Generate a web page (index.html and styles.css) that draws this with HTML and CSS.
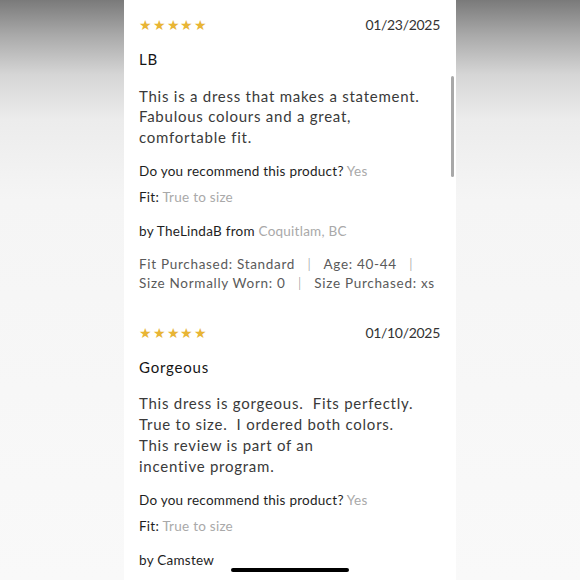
FILE: index.html
```html
<!DOCTYPE html>
<html>
<head>
<meta charset="utf-8">
<link rel="stylesheet" href="styles.css">
</head>
<body>
<div class="screen">
  <div class="panel">
    <div class="review">
      <div class="head">
        <div class="stars"><span>★</span><span>★</span><span>★</span><span>★</span><span>★</span></div>
        <div class="date">01/23/2025</div>
      </div>
      <div class="title">LB</div>
      <p class="text">This is a dress that makes a statement.<br>Fabulous colours and a great,<br>comfortable fit.</p>
      <div class="q">Do you recommend this product? <span class="val">Yes</span></div>
      <div class="q fit">Fit: <span class="val">True to size</span></div>
      <div class="by">by TheLindaB from <span class="val">Coquitlam, BC</span></div>
      <div class="meta">Fit Purchased: Standard &nbsp; <span class="sep">|</span> &nbsp; Age: 40-44 &nbsp; <span class="sep">|</span><br>Size Normally Worn: 0 &nbsp; <span class="sep">|</span> &nbsp; Size Purchased: xs</div>
    </div>
    <div class="review">
      <div class="head">
        <div class="stars"><span>★</span><span>★</span><span>★</span><span>★</span><span>★</span></div>
        <div class="date">01/10/2025</div>
      </div>
      <div class="title">Gorgeous</div>
      <p class="text">This dress is gorgeous.&nbsp; Fits perfectly.<br>True to size.&nbsp; I ordered both colors.<br>This review is part of an<br>incentive program.</p>
      <div class="q">Do you recommend this product? <span class="val">Yes</span></div>
      <div class="q fit">Fit: <span class="val">True to size</span></div>
      <div class="by">by Camstew</div>
    </div>
    <div class="scrollbar"></div>
  </div>
  <div class="homebar"></div>
</div>
</body>
</html>
```
FILE: styles.css
```css
html, body {
  margin: 0;
  padding: 0;
}
body {
  width: 580px;
  height: 580px;
  overflow: hidden;
  font-family: Lato, "Open Sans", sans-serif;
}
.screen {
  position: relative;
  width: 580px;
  height: 580px;
  display: flex;
  justify-content: center;
  background: linear-gradient(180deg, #7a7a7a 0px, #a9a9a9 35px, #d6d6d6 75px, #ececec 120px, #f5f5f5 200px, #f9f9f9 580px);
  overflow: hidden;
}
.panel {
  position: relative;
  width: 332px;
  height: 580px;
  background: #ffffff;
  box-sizing: border-box;
  padding: 15px 16px 0 15px;
}
.review {
  margin-bottom: 29.5px;
}
.head {
  display: flex;
  justify-content: space-between;
  align-items: center;
  height: 20px;
}
.stars {
  display: flex;
  gap: 1.3px;
  color: #e8b535;
  font-size: 14px;
  line-height: 20px;
}
.stars span {
  width: 12.5px;
  text-align: center;
}
.date {
  font-size: 14px;
  color: #333;
  letter-spacing: -0.3px;
  line-height: 20px;
}
.title {
  margin-top: 14px;
  font-size: 15px;
  line-height: 20px;
  color: #151515;
  letter-spacing: 0.8px;
}
.text {
  margin: 16.5px 0 0 0;
  font-size: 15px;
  line-height: 20.8px;
  color: #3a3a3a;
  letter-spacing: 0.75px;
}
.q {
  margin-top: 13.5px;
  font-size: 13.5px;
  line-height: 20px;
  color: #1e1e1e;
  letter-spacing: 0.25px;
}
.q.fit {
  margin-top: 5.5px;
}
.by {
  margin-top: 14px;
  font-size: 13.5px;
  line-height: 20px;
  color: #1e1e1e;
  letter-spacing: 0.25px;
}
.val {
  color: #a9a9a9;
}
.meta {
  margin-top: 14.5px;
  font-size: 13.5px;
  line-height: 19px;
  color: #5a5a5a;
  letter-spacing: 0.7px;
}
.sep {
  color: #777;
  font-weight: 300;
}
.scrollbar {
  position: absolute;
  left: 327px;
  top: 76px;
  width: 3px;
  height: 101px;
  border-radius: 2px;
  background: #a8a8a8;
}
.homebar {
  position: absolute;
  left: 231px;
  top: 568px;
  width: 118px;
  height: 4px;
  border-radius: 2px;
  background: #000;
}
```
